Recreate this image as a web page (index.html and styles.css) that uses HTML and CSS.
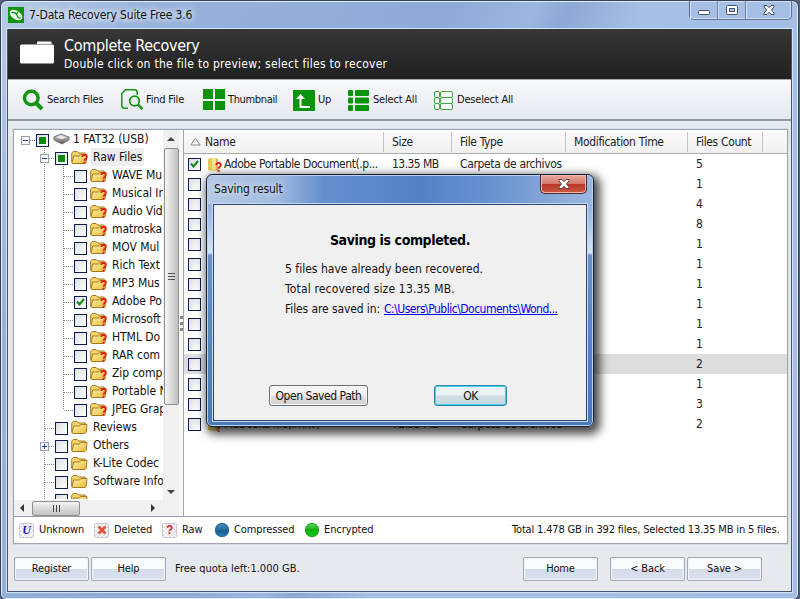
FILE: index.html
```html
<!DOCTYPE html>
<html lang="en">
<head>
<meta charset="utf-8">
<title>7-Data Recovery Suite</title>
<link rel="stylesheet" href="styles.css">
</head>
<body>
<svg width="0" height="0" class="defs">
  <defs>
    <linearGradient id="gold" x1="0" y1="0" x2="1" y2="1"><stop offset="0" stop-color="#fff6b0"/><stop offset="1" stop-color="#e9b733"/></linearGradient>
    <linearGradient id="disk" x1="0" y1="0" x2="0" y2="1"><stop offset="0" stop-color="#ddd"/><stop offset="1" stop-color="#555"/></linearGradient>
    <symbol id="folder" viewBox="0 0 17 15">
      <path d="M.7 12.500V3.200L2.200 1.500h4L7.700 3h6.500v3" fill="#f5d36c" stroke="#a77a22"/>
      <path d="M1 13 2.700 6H8.500l1.200-1.500h6.300l-.8 7.700-1.200 1.300H1.700z" fill="url(#gold)" stroke="#a77a22"/>
    </symbol>
    <symbol id="question" viewBox="0 0 7 10">
      <path d="M1.200 3C1.200 1.600 2.200 1 3.500 1s2.300.7 2.300 2c0 1.600-2.200 1.900-2.200 3.800" fill="none" stroke="#e2200c" stroke-width="1.800"/>
      <rect x="2.600" y="7.800" width="2" height="2" fill="#e2200c"/>
    </symbol>
  </defs>
</svg>
<div class="window">
  <header class="titlebar">
    <svg class="app-icon" viewBox="0 0 16 16"><rect width="16" height="16" fill="#0b940d"/><g transform="rotate(35 8 8)"><ellipse cx="8" cy="8" rx="7" ry="4.300" fill="#eaf7e6"/><path d="M3 8.500q3-3 6-.8t4.500 0M8 4v3" fill="none" stroke="#0b940d" stroke-width="1.200"/></g></svg>
    <span class="title">7-Data Recovery Suite Free 3.6</span>
    <div class="controls">
      <span class="ctl"><svg width="14" height="14"><rect x="1.500" y="7.500" width="11" height="4" rx="1" fill="#fff" stroke="#48536c"/></svg></span>
      <span class="ctl"><svg width="14" height="14"><rect x="1.500" y="2.500" width="11" height="9" rx="1" fill="#fff" stroke="#48536c"/><rect x="4.500" y="5.500" width="5" height="3" fill="#a9bfdf" stroke="#48536c"/></svg></span>
      <span class="ctl wide"><svg width="14" height="14"><path d="M2 2.500h3l2 2.200 2-2.200h3v1.500L9.500 7l2.500 3v1.500H9L7 9.300 5 11.500H2V10l2.500-3L2 4z" fill="#fff" stroke="#48536c"/></svg></span>
    </div>
  </header>
  <div class="client">
    <section class="banner">
      <svg width="34" height="23" viewBox="0 0 34 23"><path d="M17 1.500q0-1 1-1h12.500q1 0 1 1V3H17z" fill="#fff"/><rect y="3.500" width="34" height="19" rx="1.500" fill="#fff"/><path d="M16 3.300h16" stroke="#aaa" stroke-width=".8"/></svg>
      <div><h1>Complete Recovery</h1><p>Double click on the file to preview; select files to recover</p></div>
    </section>
    <nav class="toolbar">
      <div class="tool t1"><svg width="22" height="22"><circle cx="9.300" cy="9" r="6.800" fill="none" stroke="#149414" stroke-width="3.400"/><path d="m14 14 6 6" stroke="#149414" stroke-width="4"/></svg><span>Search Files</span></div>
      <div class="tool t2"><svg width="22" height="22"><path d="M7 19.200H3.500q-2.700 0-2.700-2.700V4.500L4.500.8h9q2.700 0 2.700 2.700V6" fill="none" stroke="#149414" stroke-width="1.500"/><circle cx="13.500" cy="12" r="4.800" fill="none" stroke="#149414" stroke-width="1.800"/><path d="m17 15.500 4.300 4.700" stroke="#149414" stroke-width="2.500"/></svg><span>Find File</span></div>
      <div class="tool t3"><svg width="22" height="22" fill="#0a940a"><path d="M0 0h10v10H0zM12 0h10v10H12zM0 12h10v9H0zM12 12h10v9H12z"/></svg><span>Thumbnail</span></div>
      <div class="tool t4"><svg width="22" height="21"><rect width="22" height="21" fill="#0a940a"/><path d="M7.500 7v10H17" fill="none" stroke="#fff" stroke-width="2"/><path d="M3 9 7.500 4l4.500 5z" fill="#fff"/></svg><span>Up</span></div>
      <div class="tool t5"><svg width="22" height="21" fill="#0a940a"><rect width="5" height="6" rx="1"/><rect x="7" width="14" height="6" rx="1"/><rect y="7.500" width="5" height="6" rx="1"/><rect x="7" y="7.500" width="14" height="6" rx="1"/><rect y="15" width="5" height="6" rx="1"/><rect x="7" y="15" width="14" height="6" rx="1"/></svg><span>Select All</span></div>
      <div class="tool t6"><svg width="20" height="21" fill="#fff" stroke="#3aa53a"><rect x=".5" y="1.500" width="5" height="6" rx="1.500"/><rect x="6.500" y="1.500" width="12" height="6" rx="1.500"/><rect x=".5" y="7.500" width="5" height="6" rx="1.500"/><rect x="6.500" y="7.500" width="12" height="6" rx="1.500"/><rect x=".5" y="13.500" width="5" height="6" rx="1.500"/><rect x="6.500" y="13.500" width="12" height="6" rx="1.500"/></svg><span>Deselect All</span></div>
    </nav>
    <main class="panel">
      <div class="views">
        <aside class="side">
          <div class="side-main">
            <div class="tree" id="tree"></div>
            <div class="vscroll"><i class="arrow up"></i><div class="thumb"><i></i><i></i><i></i></div><i class="arrow down"></i></div>
          </div>
          <div class="hscroll"><i class="arrow left"></i><div class="thumb"><i></i><i></i><i></i></div><i class="arrow right"></i></div>
        </aside>
        <div class="splitter"><i></i><i></i><i></i></div>
        <section class="list">
          <div class="row head"><span class="sort"><svg width="11" height="9"><path d="M.8 8 5.500 1.200 10.200 8z" fill="#f7f7f7" stroke="#8b8b8b"/></svg>Name</span><span>Size</span><span>File Type</span><span>Modification Time</span><span>Files Count</span><span></span></div>
          <div id="rows"></div>
        </section>
      </div>
      <footer class="legend">
        <span class="tile u">U</span><span class="l1">Unknown</span>
        <span class="tile"><svg width="10" height="10"><path d="m1.500 1.500 7 7m0-7-7 7" stroke="#e0533a" stroke-width="2.800"/></svg></span><span class="l2">Deleted</span>
        <span class="tile q">?</span><span class="l3">Raw</span>
        <span class="ball blue"></span><span class="l4">Compressed</span>
        <span class="ball green"></span><span class="l5">Encrypted</span>
        <span class="total">Total 1.478 GB in 392 files, Selected 13.35 MB in 5 files.</span>
      </footer>
    </main>
    <div class="actions">
      <button>Register</button><button>Help</button><span class="quota">Free quota left:1.000 GB.</span>
      <button class="home">Home</button><button class="back">&lt; Back</button><button>Save &gt;</button>
    </div>
  </div>
</div>
<div class="dialog">
  <div class="dlg-title"><span>Saving result</span><b class="dlg-close"><svg width="14" height="12"><path d="M2 1.500h3l2 2.200 2-2.200h3v1.300L9.500 6l2.500 3v1.500H9L7 8.300 5 10.500H2V9l2.500-3L2 3z" fill="#fff" stroke="#5c4148"/></svg></b></div>
  <div class="dlg-body">
    <h2>Saving is completed.</h2>
    <div class="msg"><p class="m1">5 files have already been recovered.</p><p class="m2">Total recovered size 13.35 MB.</p><p class="m3"><span>Files are saved in:</span><a>C:\Users\Public\Documents\Wond...</a></p></div>
    <div class="dlg-actions"><button class="open">Open Saved Path</button><button class="ok">OK</button></div>
  </div>
</div>
<script src="app.js"></script>
</body>
</html>
```
FILE: app.js
```js
const raw = ['WAVE Mu', 'Musical In', 'Audio Vid', 'matroska', 'MOV Mul', 'Rich Text', 'MP3 Mus', 'Adobe Po', 'Microsoft', 'HTML Do', 'RAR com', 'Zip comp', 'Portable N', 'JPEG Grap'];
const tick = '<svg width="9" height="8"><path d="m1 3.500 2.500 3L8 1" fill="none" stroke="#118a11" stroke-width="2"/></svg>';
const box = state => `<span class="box">${state === 'part' ? '<i></i>' : state === 'on' ? tick : ''}</span>`;
const folder = q => `<span class="folder"><svg width="17" height="15"><use href="#folder"/></svg>${q ? '<svg class="mark" width="7" height="10"><use href="#question"/></svg>' : ''}</span>`;
const drive = '<svg class="drive" width="17" height="12"><path d="M1 4 8 1l8 3v3l-7 4-8-4z" fill="url(#disk)" stroke="#777"/><path d="M3 4.200 8 2.500l5 1.700-4 2z" fill="#e8e8e8"/></svg>';
const toggle = sign => `<svg class="toggle" width="9" height="9"><rect x=".5" y=".5" width="8" height="8" fill="#f8f8f8" stroke="#96a0ae"/><path d="M2 4.500h5${sign === '+' ? 'M4.500 2v5' : ''}" stroke="#25449b"/></svg>`;
const item = (cls, sign, state, icon, text) => `<div class="node ${cls}"><span class="stem">${sign ? toggle(sign) : ''}</span>${box(state)}${icon}<span class="label">${text}</span></div>`;

document.getElementById('tree').innerHTML = [
  item('d0', '-', 'part', drive, '1 FAT32 (USB)'),
  item('d1 current', '-', 'part', folder(true), 'Raw Files'),
  ...raw.map((t, i) => item(i === 13 ? 'd2 last' : 'd2', '', i === 7 ? 'on' : '', folder(true), t)),
  item('d1', '', '', folder(false), 'Reviews'),
  item('d1', '+', '', folder(false), 'Others'),
  item('d1', '', '', folder(false), 'K-Lite Codec'),
  item('d1', '', '', folder(false), 'Software Info'),
  item('d1', '', '', folder(false), '')
].join('');

const counts = [5, 1, 4, 8, 1, 1, 1, 1, 1, 1, 2, 1, 3, 2];
document.getElementById('rows').innerHTML = counts.map((n, i) => {
  const name = i === 0 ? 'Adobe Portable Document(.p...' : i === 13 ? 'Matroska file(.mkv)' : '';
  const size = i === 0 ? '13.35 MB' : i === 13 ? '72.33 MB' : '';
  const type = name ? 'Carpeta de archivos' : '';
  const icon = name ? '<svg class="file" width="15" height="15"><path d="M1 2 5 1v13l-4-1z" fill="#e9c95c"/><path d="M5 1h6v13H5z" fill="#f5e18b"/><path d="M9 2h2v11H9z" fill="#d9b84d"/><svg x="8" y="5" width="7" height="10"><use href="#question"/></svg></svg>' : '';
  return `<div class="row${i === 10 ? ' selected' : ''}"><span class="name">${box(i === 0 ? 'on' : '')}${icon}<em>${name}</em></span><span class="size">${size}</span><span class="type">${type}</span><span></span><span>${n}</span><span></span></div>`;
}).join('');
```
FILE: styles.css
```css
* { box-sizing: border-box; }
body { margin: 0; width: 800px; height: 599px; overflow: hidden; background: #55617c; color: #111; font: 12px/18px "DejaVu Sans Condensed", "DejaVu Sans", sans-serif; font-stretch: condensed; letter-spacing: -0.35px; white-space: nowrap; }
h1, h2, p { margin: 0; font-weight: normal; }
svg { display: block; flex: none; }
.defs { position: absolute; }
.window { height: 600px; width: 799px; border: 1px solid #35405a; border-radius: 7px 7px 6px 6px; background: linear-gradient(115deg, #b7cce8 0, #98b2dc 14%, #8faad7 42%, #9bb6df 50%, #8da8d5 53%, #a6bfe4 60%, #a5bde4 100%); box-shadow: inset 0 0 0 1px #e2edfb; padding: 0 6px 7px; display: flex; flex-direction: column; }
.titlebar { height: 28px; flex: none; display: flex; padding-left: 1px; }
.app-icon { width: 16px; height: 16px; margin-top: 6px; }
.title { margin: 5px 0 0 5px; text-shadow: 0 0 7px #fff, 0 0 7px #fff; letter-spacing: -.15px; }
.controls { display: flex; height: 19px; margin: 0 0 0 auto; width: 103px; border: 1px solid #5f7194; border-top: 0; border-radius: 0 0 5px 5px; box-shadow: inset 0 0 0 1px #cfdef3; }
.ctl { width: 28px; display: flex; justify-content: center; padding-top: 2px; border-right: 1px solid #6f81a5; box-shadow: inset 1px 0 #d3e0f4; }
.ctl.wide { flex: 1; border: 0; }
.client { flex: 1; background: #e6e9ee; border: 1px solid #47546f; border-top: 0; box-shadow: 0 0 0 1px #d3e2f7; display: flex; flex-direction: column; min-height: 0; }
.banner { height: 50px; background: linear-gradient(#373737, #202020); color: #fff; display: flex; padding: 12px 0 0 12px; flex: none; }
.banner > div { margin-left: 10px; margin-top: -5px; }
.banner h1 { font-size: 16px; line-height: 20px; letter-spacing: -.3px; }
.banner p { line-height: 17px; letter-spacing: .27px; }
.toolbar { height: 42px; flex: none; display: flex; background: linear-gradient(#f8f9fb, #e4e8ed); border-top: 1px solid #a7a9ac; border-bottom: 2px solid #9298a1; padding: 9px 0 0 14px; }
.tool { display: flex; gap: 3px; height: 22px; align-items: center; font-size: 11px; letter-spacing: -.2px; }
.t1 { width: 99px; } .t2 { width: 82px; } .t3 { width: 90px; letter-spacing: -.35px; } .t4 { width: 55px; } .t5 { width: 86px; }
.panel { margin: 8px 0 0 5px; height: 415px; width: 775px; flex: none; border: 1px solid #a0a6af; box-shadow: 0 0 0 1px #d9dde3; background: #fff; }
.views { display: flex; height: 387px; border-bottom: 1px solid #9ba1aa; }
.side { width: 165px; display: flex; flex-direction: column; }
.side-main { display: flex; height: 370px; }
.tree { width: 149px; height: 369px; overflow: hidden; background: #fff; letter-spacing: -.05px; }
.node { display: flex; height: 18px; align-items: center; }
.stem { flex: none; align-self: stretch; display: flex; align-items: center; }
.d0 .stem { width: 22px; padding-left: 7px; background: repeating-linear-gradient(90deg, #888 0 1px, transparent 1px 2px) 16px 10px / 5px 1px no-repeat; }
.d1 .stem { width: 41px; padding-left: 26px; background: repeating-linear-gradient(90deg, #888 0 1px, transparent 1px 2px) 31px 10px / 10px 1px no-repeat, repeating-linear-gradient(#888 0 1px, transparent 1px 2px) 30px 0 / 1px 18px no-repeat; }
.d2 .stem { width: 60px; background: repeating-linear-gradient(90deg, #888 0 1px, transparent 1px 2px) 50px 10px / 10px 1px no-repeat, repeating-linear-gradient(#888 0 1px, transparent 1px 2px) 30px 0 / 1px 18px no-repeat, repeating-linear-gradient(#888 0 1px, transparent 1px 2px) 49px 0 / 1px 18px no-repeat; }
.d2.last .stem { background-size: 10px 1px, 1px 18px, 1px 10px; }
.toggle { margin-top: 2px; }
.box { flex: none; width: 13px; height: 13px; border: 1px solid #0d1c50; background: linear-gradient(135deg, #dcdfe2, #fff); display: flex; align-items: center; justify-content: center; margin-top: 2px; }
.box i { width: 7px; height: 7px; background: #0d8a12; }
.folder { margin: 1px 0 0 3px; display: flex; flex: none; width: 17px; }
.folder .mark { margin: 4px 0 0 -7px; }
.drive { margin-left: 4px; }
.label { margin-left: 5px; line-height: 18px; }
.d0 .label { margin-left: 3px; }
.current .label { background: #eee; padding: 0 2px; margin-left: 3px; }
.vscroll { width: 16px; background: #f0f0f0; display: flex; flex-direction: column; align-items: center; padding: 7px 0 6px; }
.vscroll .thumb { width: 15px; height: 257px; margin-top: 7px; border: 1px solid #8f8f8f; border-radius: 2px; background: linear-gradient(90deg, #f6f6f6, #dadada 50%, #bfbfc2); display: flex; flex-direction: column; align-items: center; justify-content: center; gap: 2px; }
.vscroll .thumb i { width: 7px; height: 1px; background: #555; }
.vscroll .down { margin-top: auto; }
.arrow { border: 4px solid transparent; width: 0; height: 0; }
.up { border-top: 0; border-bottom-color: #444; } .down { border-bottom: 0; border-top-color: #444; }
.left { border-left: 0; border-right-color: #333; } .right { border-right: 0; border-left-color: #333; }
.hscroll { height: 16px; background: #f0f0f0; display: flex; align-items: center; padding-left: 6px; }
.hscroll .thumb { width: 48px; height: 15px; margin-left: 8px; border: 1px solid #8f8f8f; border-radius: 2px; background: linear-gradient(#f6f6f6, #dadada 50%, #c3c3c6); display: flex; align-items: center; justify-content: center; gap: 2px; }
.hscroll .thumb i { width: 1px; height: 7px; background: #444; }
.hscroll .right { margin-left: 71px; }
.splitter { width: 5px; display: flex; flex-direction: column; align-items: center; gap: 3px; padding-top: 186px; background: #f7f7f7; border-right: 1px solid #a5a5a8; }
.splitter i { width: 3px; height: 3px; background: #888; }
.list { flex: 1; color: #222; }
.row { display: grid; grid-template-columns: 200px 68px 114px 122px 75px 1fr; height: 20px; align-items: center; line-height: 20px; }
.row > span { padding-left: 8px; }
.row.head { height: 24px; background: linear-gradient(#fbfbfb, #f1f1f1); border-bottom: 1px solid #a9acb3; }
.row.head > span { height: 20px; border-right: 1px solid #c7c3bb; line-height: 20px; }
.row.head > span:last-child { border: 0; }
.row .name, .row.head .sort { padding-left: 4px; display: flex; align-items: center; overflow: hidden; }
.row.head .sort { gap: 4px; padding-left: 6px; }
.row .name { letter-spacing: -.43px; }
.row .size { letter-spacing: -.55px; }
.row .box { margin-top: 0; }
.file { margin: 0 1px 0 6px; }
em { font-style: normal; margin-left: 1px; }
.selected { background: #ddd; }
.legend { display: flex; align-items: center; height: 26px; padding-left: 5px; font-size: 11px; letter-spacing: -.1px; }
.tile { width: 15px; height: 15px; border: 1px solid #c6c9ce; border-radius: 2px; background: repeating-conic-gradient(#e3e3e6 0 25%, #fff 0 50%) 0 0 / 4px 4px; display: flex; align-items: center; justify-content: center; }
.u { color: #1414c8; font: italic bold 12px/13px "Liberation Serif", serif; }
.q { color: #e21616; font: bold 12px/13px "Liberation Sans", sans-serif; }
.l1 { width: 55px; margin-left: 5px; } .l2 { width: 48px; margin-left: 5px; } .l3 { width: 33px; margin-left: 5px; } .l4 { width: 71px; margin-left: 5px; } .l5 { margin-left: 5px; }
.ball { width: 14px; height: 14px; border-radius: 50%; }
.blue { background: linear-gradient(#4f95c5, #16608f 60%, #2c86bd); box-shadow: inset 0 0 0 1px #2a6796; }
.green { background: linear-gradient(#6fe26f, #0aad0a 50%, #16cf16); box-shadow: inset 0 0 0 1px #25a325; }
.total { margin: 0 7px 0 auto; width: 268px; letter-spacing: -.16px; }
.actions { display: flex; padding: 13px 0 0 6px; height: 38px; }
button { padding: 0; font: inherit; letter-spacing: inherit; color: #111; }
.actions button { flex: none; width: 75px; height: 24px; margin-right: 2px; border: 1px solid #a3a8b2; border-radius: 2px; background: linear-gradient(#fafbfe 0 48%, #d4dbe9 52%, #dce2ee); box-shadow: inset 0 0 0 1px #f3f5fa; font-size: 11px; letter-spacing: -.15px; }
.quota { margin: 0 0 0 7px; width: 348px; font-size: 11px; line-height: 24px; letter-spacing: .02px; }
.actions .home { margin-right: 12px; }
.dialog { position: absolute; left: 206px; top: 174px; width: 388px; height: 253px; border: 1px solid #172135; border-radius: 6px; background: linear-gradient(#8fabd6 0, #9ab6e0 14%, #d7e5f6 31%, #6991c8 32%, #4a78b9 100%); box-shadow: inset 0 0 0 1px #bcd3f0, 3px 4px 10px 3px rgba(0, 0, 0, .72); padding: 0 6px 6px; }
.dlg-title { height: 28px; display: flex; margin: 1px -5px 0; padding-left: 6px; line-height: 26px; border-radius: 5px 5px 0 0; background: linear-gradient(90deg, #b5c9e5 0, #a1bbdf 18%, #658fcc 30%, #5481c4 55%, #6a93cf 75%, #9bb7df); }
.dlg-title span { text-shadow: 0 0 6px #fff; letter-spacing: -.15px; }
.dlg-close { width: 47px; height: 19px; margin: -1px 5px 0 auto; border: 1px solid #4e2630; border-top: 0; border-radius: 0 0 5px 5px; background: linear-gradient(#e8aaa1 0, #d4796d 48%, #b93424 50%, #cd5a45 100%); box-shadow: inset 0 0 0 1px #efb9b0; display: flex; align-items: center; justify-content: center; }
.dlg-body { height: 217px; background: #f0f0f0; border: 1px solid #2e456c; box-shadow: 0 0 0 1px #c5daf3; padding: 25px 0 0; }
.dlg-body h2 { font-size: 14px; font-weight: bold; letter-spacing: -.4px; text-align: center; line-height: 20px; color: #000; }
.msg { padding: 9px 0 0 71px; line-height: 20px; }
.m1 { letter-spacing: .02px; } .m2 { letter-spacing: .17px; } .m3 { display: flex; }
.m3 span { width: 99px; letter-spacing: -.1px; }
a { color: #0000f0; text-decoration: underline; letter-spacing: -.5px; }
.dlg-actions { display: flex; padding: 66px 0 0 55px; }
.dlg-actions button { height: 21px; border: 1px solid #707070; border-radius: 3px; background: linear-gradient(#f3f3f3 0 48%, #dedede 52%, #d2d2d2); box-shadow: inset 0 0 0 1px #fafafa; letter-spacing: -.45px; }
.open { width: 99px; }
.dlg-actions .ok { width: 73px; margin-left: 66px; border-color: #2d86aa; box-shadow: inset 0 0 0 1px #49ccec; background: linear-gradient(#e9f2f6 0 48%, #d2dfe5 52%, #c6d8df); }
```
